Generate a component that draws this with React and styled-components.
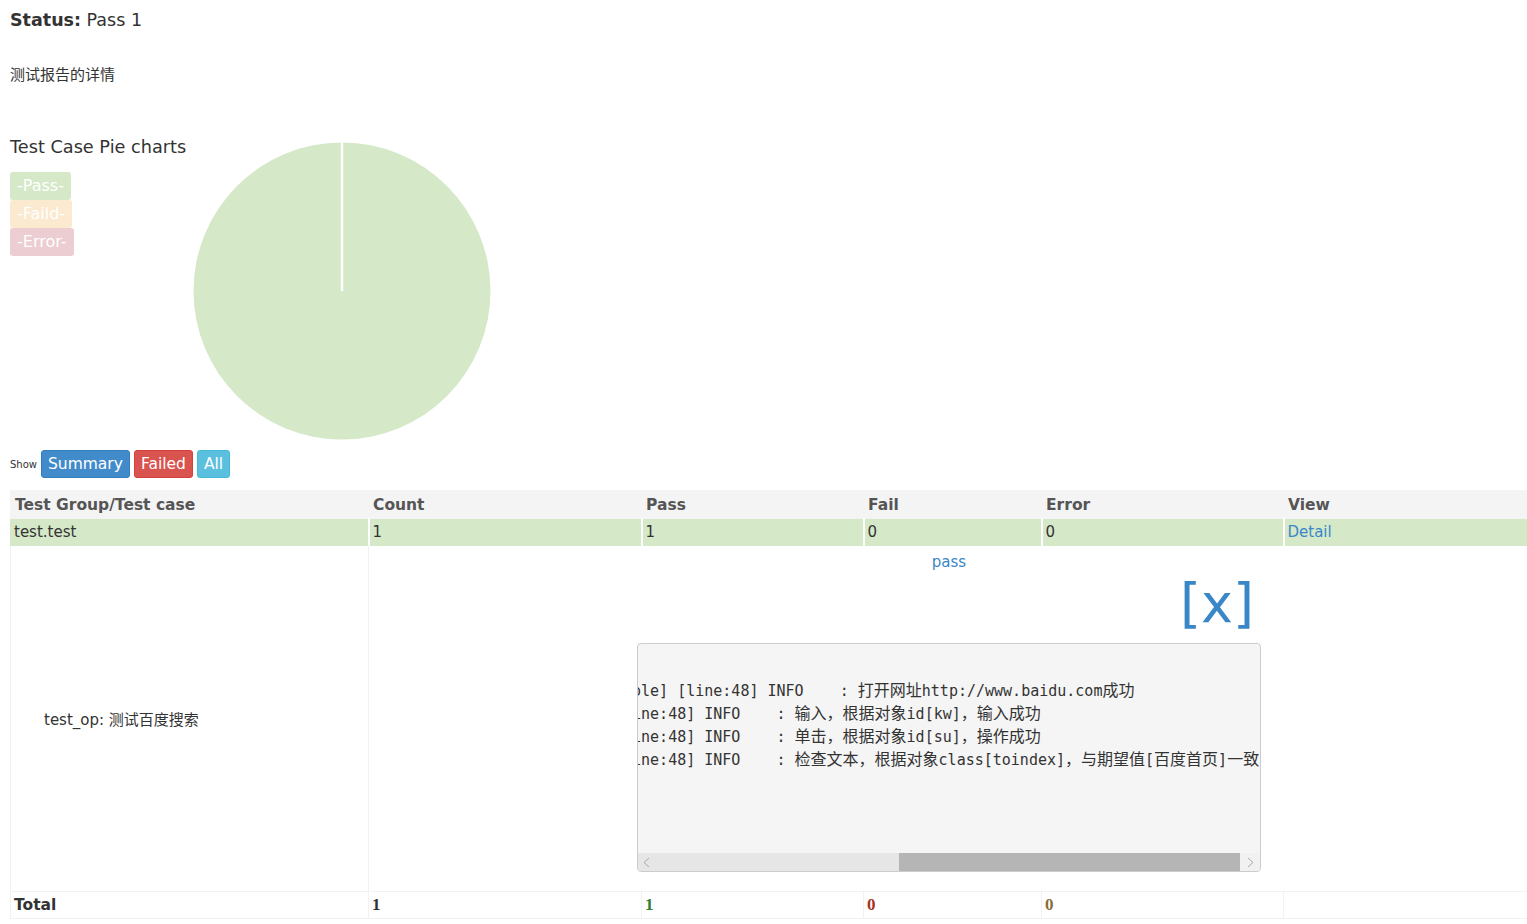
import React from 'react';
import styled, { createGlobalStyle } from 'styled-components';

const GlobalStyle = createGlobalStyle`
  html, body { margin: 0; padding: 0; overflow: hidden; background: #fff; }
  body { font-family: "DejaVu Sans", "Noto Sans CJK SC", sans-serif; color: #333; }
`;

const Page = styled.div` padding: 0 10px; `;
const StatusLine = styled.p` margin: 10px 0 0; font-size: 17.5px; line-height: 21px; b { font-weight: bold; } `;
const Desc = styled.p` margin: 35px 0 0; font-size: 15px; line-height: 18px; `;

const ChartSection = styled.div` display: flex; margin-top: 51px; `;
const LegendCol = styled.div` width: 182px; flex-shrink: 0; `;
const ChartTitle = styled.h3` margin: 0; font-size: 17.7px; font-weight: normal; line-height: 24px; color: #333; `;
const Legend = styled.div` display: flex; flex-direction: column; align-items: flex-start; margin-top: 13px; `;
const LegendTag = styled.span`
  display: inline-block; height: 28px; line-height: 28px; padding: 0 7px;
  font-size: 16px; color: #fff; border-radius: 3px; background: ${p => p.$bg};
`;
const PieSvg = styled.svg` margin-top: 6px; display: block; `;

const ShowRow = styled.div` display: flex; align-items: center; gap: 4px; margin-top: 9px; `;
const ShowLabel = styled.span` font-size: 10px; `;
const FilterButton = styled.button`
  height: 28px; padding: 0 6px; border-radius: 3px; border: 1px solid ${p => p.$border};
  background: ${p => p.$bg}; color: #fff; font-family: "DejaVu Sans", sans-serif; font-size: 15.5px; cursor: pointer;
`;

const Table = styled.table`
  margin-top: 12px; border-collapse: collapse; table-layout: fixed; width: 1519px;
  font-size: 15px;
`;
const HeadCell = styled.th`
  height: 27px; padding: 0 4px; text-align: left; font-weight: bold; color: #555; font-size: 15.5px;
  background: #f4f4f4; border: 1px solid #f4f4f4;
`;
const Cell = styled.td`
  height: 26px; padding: 0 3px; text-align: left; vertical-align: middle;
  background: ${p => (p.$success ? '#d5e8c8' : '#fff')};
  border: 1px solid ${p => (p.$success ? '#d5e8c8' : '#f2f2f2')};
  border-left: 2px solid ${p => (p.$success ? '#fff' : '#f2f2f2')};
  &:first-child { border-left: 1px solid ${p => (p.$success ? '#d5e8c8' : '#f2f2f2')}; }
`;
const TotalCell = styled(Cell)`
  font-weight: bold; border-left: 1px solid #f2f2f2;
  font-family: ${p => (p.$serif ? '"Liberation Serif", serif' : '"DejaVu Sans", sans-serif')};
  font-size: ${p => (p.$serif ? '17px' : '15.5px')};
  color: ${p => p.$color || '#333'};
`;
const CaseCell = styled.td`
  padding: 0 0 0 33px; vertical-align: middle; border: 1px solid #f2f2f2;
`;
const DetailCell = styled.td`
  padding: 7px 0 9px; text-align: center; vertical-align: top; border: 1px solid #f2f2f2;
`;
const Link = styled.a` color: #3a87c8; text-decoration: none; cursor: pointer; line-height: 18px; `;

const Popup = styled.div` width: 624px; margin: 0 auto; text-align: left; `;
const CloseRow = styled.div`
  height: 60px; text-align: right; padding-right: 7px; font-size: 54px; line-height: 60px;
  color: #3a87c8; cursor: pointer; margin-top: 3px;
`;
const LogBox = styled.div`
  margin: 9px 0 10px; height: 227px; display: flex; flex-direction: column;
  background: #f5f5f5; border: 1px solid #ccc; border-radius: 4px; overflow: hidden;
`;
const LogView = styled.div` flex: 1; overflow: hidden; `;
const LogText = styled.pre`
  margin: 0 0 0 -304px; padding-top: 13px; white-space: pre;
  font-family: "DejaVu Sans Mono", "Noto Sans CJK SC", monospace; font-size: 15px; line-height: 23px; color: #333;
`;
const Cjk = styled.span` font-family: "Noto Sans CJK SC", sans-serif; font-size: 16px; line-height: 16px; `;
const ScrollBar = styled.div` height: 18px; display: flex; background: #e6e6e6; `;
const ScrollArrow = styled.div`
  width: ${p => p.$w}px; display: flex; align-items: center; justify-content: center;
  background: ${p => p.$bg};
`;
const ScrollTrack = styled.div` flex: 1; display: flex; justify-content: flex-end; `;
const ScrollThumb = styled.div` width: 341px; background: #b5b5b5; `;

const logLines = [
  '',
  '2020-04-10 10:21:33 [browser_console] [line:48] INFO    : 打开网址http://www.baidu.com成功',
  '2020-04-10 10:21:34 [basepage] [line:48] INFO    : 输入，根据对象id[kw]，输入成功',
  '2020-04-10 10:21:35 [basepage] [line:48] INFO    : 单击，根据对象id[su]，操作成功',
  '2020-04-10 10:21:36 [basepage] [line:48] INFO    : 检查文本，根据对象class[toindex]，与期望值[百度首页]一致',
];

const cjkRun = /([\u3000-\u9fff\uff00-\uffef]+)/;

const LogLine = ({ text }) => (
  <>
    {text.split(cjkRun).map((part, i) =>
      i % 2 === 1 ? <Cjk key={i}>{part}</Cjk> : part
    )}
    {'\n'}
  </>
);

const Chevron = ({ left }) => (
  <svg width="7" height="11" viewBox="0 0 7 11">
    <polyline points={left ? '6,1 1,5.5 6,10' : '1,1 6,5.5 1,10'} fill="none" stroke="#a8a8a8" strokeWidth="1" />
  </svg>
);

export default function App() {
  return (
    <Page>
      <GlobalStyle />
      <StatusLine><b>Status:</b> Pass 1</StatusLine>
      <Desc>测试报告的详情</Desc>

      <ChartSection>
        <LegendCol>
          <ChartTitle>Test Case Pie charts</ChartTitle>
          <Legend>
            <LegendTag $bg="#d5e8c8">-Pass-</LegendTag>
            <LegendTag $bg="#fbeacf">-Faild-</LegendTag>
            <LegendTag $bg="#ebcdd2">-Error-</LegendTag>
          </Legend>
        </LegendCol>
        <PieSvg width="300" height="300" viewBox="0 0 300 300">
          <circle cx="150" cy="150" r="148.5" fill="#d5e8c8" />
          <line x1="150" y1="150" x2="150" y2="0" stroke="#fff" strokeWidth="2.5" />
        </PieSvg>
      </ChartSection>

      <ShowRow>
        <ShowLabel>Show</ShowLabel>
        <FilterButton $bg="#428bca" $border="#357ebd">Summary</FilterButton>
        <FilterButton $bg="#d9534f" $border="#d43f3a">Failed</FilterButton>
        <FilterButton $bg="#5bc0de" $border="#46b8da">All</FilterButton>
      </ShowRow>

      <Table>
        <colgroup>
          <col style={{ width: 358 }} />
          <col style={{ width: 273 }} />
          <col style={{ width: 222 }} />
          <col style={{ width: 178 }} />
          <col style={{ width: 242 }} />
          <col style={{ width: 246 }} />
        </colgroup>
        <thead>
          <tr>
            <HeadCell>Test Group/Test case</HeadCell>
            <HeadCell>Count</HeadCell>
            <HeadCell>Pass</HeadCell>
            <HeadCell>Fail</HeadCell>
            <HeadCell>Error</HeadCell>
            <HeadCell>View</HeadCell>
          </tr>
        </thead>
        <tbody>
          <tr>
            <Cell $success>test.test</Cell>
            <Cell $success>1</Cell>
            <Cell $success>1</Cell>
            <Cell $success>0</Cell>
            <Cell $success>0</Cell>
            <Cell $success><Link>Detail</Link></Cell>
          </tr>
          <tr>
            <CaseCell>test_op: 测试百度搜索</CaseCell>
            <DetailCell colSpan={5}>
              <Link>pass</Link>
              <Popup>
                <CloseRow>[x]</CloseRow>
                <LogBox>
                  <LogView>
                    <LogText>{logLines.map((l, i) => <LogLine key={i} text={l} />)}</LogText>
                  </LogView>
                  <ScrollBar>
                    <ScrollArrow $w={16} $bg="#e6e6e6"><Chevron left /></ScrollArrow>
                    <ScrollTrack><ScrollThumb /></ScrollTrack>
                    <ScrollArrow $w={20} $bg="#f1f1f1"><Chevron /></ScrollArrow>
                  </ScrollBar>
                </LogBox>
              </Popup>
            </DetailCell>
          </tr>
          <tr>
            <TotalCell>Total</TotalCell>
            <TotalCell $serif>1</TotalCell>
            <TotalCell $serif $color="#2e7d32">1</TotalCell>
            <TotalCell $serif $color="#a93226">0</TotalCell>
            <TotalCell $serif $color="#8a6d3b">0</TotalCell>
            <TotalCell />
          </tr>
        </tbody>
      </Table>
    </Page>
  );
}
